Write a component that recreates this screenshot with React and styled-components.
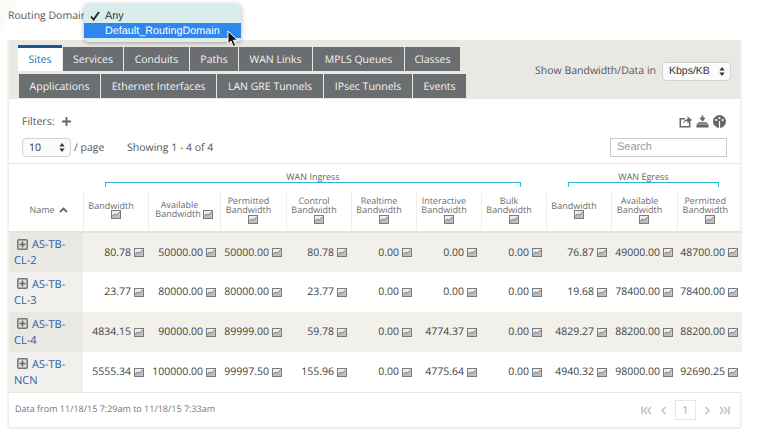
import React from "react";
import styled, { createGlobalStyle } from "styled-components";

const GlobalStyle = createGlobalStyle`
  html, body {
    margin: 0;
    padding: 0;
    background: #ffffff;
    font-family: "Open Sans", "Liberation Sans", sans-serif;
    color: #4a4a4a;
    overflow: hidden;
    text-rendering: geometricPrecision;
  }
`;

const Page = styled.div`
  position: relative;
  width: 757px;
  height: 431px;
  padding: 0 16px 0 8px;
  box-sizing: border-box;
  background: linear-gradient(118deg, #fbfaf6 0, #fbfaf6 15px, #ffffff 16px);
`;

const TopBar = styled.div`
  height: 40px;
  padding-top: 8px;
  box-sizing: border-box;
  font-size: 10.5px;
  line-height: 17px;
  color: #555;
`;

const Menu = styled.div`
  position: absolute;
  left: 84px;
  top: 4px;
  width: 157px;
  height: 38px;
  padding-top: 4px;
  box-sizing: border-box;
  border-radius: 5px;
  background: #d9edec;
  box-shadow: 0 1px 5px rgba(0, 0, 0, 0.3);
  font-family: "Liberation Sans", sans-serif;
  font-size: 10.8px;
  z-index: 2;
`;

const MenuItem = styled.div`
  position: relative;
  height: 15px;
  line-height: 16px;
  padding-left: 21px;
  color: ${(p) => (p.$active ? "#ffffff" : "#333333")};
  background: ${(p) => (p.$active ? "#2f86ec" : "transparent")};
`;

const Check = styled.svg`
  position: absolute;
  left: 6px;
  top: 3px;
`;

const Cursor = styled.svg`
  position: absolute;
  left: 227px;
  top: 30px;
  z-index: 3;
`;

const Panel = styled.div`
  box-shadow: 0 1px 2px rgba(0, 0, 0, 0.14);
  border-left: 1px solid #eeeeea;
  border-right: 1px solid #eeeeea;
`;

const TabArea = styled.div`
  height: 59px;
  background: #e9e8e3;
  padding: 5px 0 0 9px;
  box-sizing: border-box;
  display: flex;
  justify-content: space-between;
`;

const TabRows = styled.div`
  display: flex;
  flex-direction: column;
  gap: 3px;
`;

const TabRow = styled.div`
  display: flex;
  gap: 1px;
  padding-left: ${(p) => p.$indent || 0}px;
  align-items: flex-end;
`;

const Tab = styled.div`
  width: ${(p) => p.$w}px;
  height: ${(p) => (p.$active ? 26 : 24)}px;
  box-sizing: border-box;
  background: ${(p) => (p.$active ? "#ffffff" : "#6b6e70")};
  color: ${(p) => (p.$active ? "#2a6cb0" : "#f4f4f4")};
  border-top: ${(p) => (p.$active ? "3px solid #17559c" : "none")};
  font-size: 10.5px;
  font-weight: 400;
  line-height: ${(p) => (p.$active ? 25 : 26)}px;
  text-align: center;
  white-space: nowrap;
`;

const UnitPicker = styled.div`
  display: flex;
  align-items: center;
  gap: 6px;
  height: 26px;
  margin: 13px 9px 0 0;
  font-size: 10.5px;
  color: #555;
`;

const NativeSelect = styled.div`
  width: ${(p) => p.$w}px;
  height: ${(p) => p.$h}px;
  box-sizing: border-box;
  border: 1px solid #d2d2d2;
  border-radius: 4px;
  background: #fbfbfb;
  display: flex;
  align-items: center;
  justify-content: space-between;
  padding: 0 5px 0 6px;
  font-family: ${(p) => (p.$sans ? '"Liberation Sans", sans-serif' : "inherit")};
  font-size: 10.5px;
  color: #333;
`;

const Toolbar = styled.div`
  height: 65px;
  padding: 0 13px;
  box-sizing: border-box;
  border-bottom: 1px solid #e6e6e6;
  display: flex;
  justify-content: space-between;
`;

const ToolbarLeft = styled.div`
  padding-top: 14px;
  font-size: 10.5px;
  color: #555;
`;

const FilterLine = styled.div`
  display: flex;
  align-items: center;
  gap: 8px;
  height: 17px;
`;

const PageLine = styled.div`
  display: flex;
  align-items: center;
  margin-top: 8px;
  height: 19px;
`;

const PerPage = styled.span`
  margin-left: 3px;
  width: 53px;
`;

const ToolbarRight = styled.div`
  display: flex;
  flex-direction: column;
  align-items: flex-end;
  padding-top: 16px;
`;

const ExportIcons = styled.div`
  display: flex;
  gap: 4px;
  height: 14px;
  margin-right: 1px;
`;

const Search = styled.div`
  width: 117px;
  height: 19px;
  margin-top: 9px;
  box-sizing: border-box;
  border: 1px solid #cccccc;
  padding-left: 6px;
  font-family: "Liberation Sans", sans-serif;
  font-size: 11px;
  line-height: 17px;
  color: #9a9a9a;
`;

const GroupRow = styled.div`
  height: 27px;
  padding-left: 96px;
  display: flex;
  gap: 47px;
`;

const Group = styled.div`
  width: ${(p) => p.$w}px;
  font-size: 9px;
  line-height: 13px;
  padding-top: 6px;
  text-align: center;
  color: #666;
  box-sizing: border-box;
`;

const Bracket = styled.div`
  height: 4px;
  margin-top: -1px;
  border: 1px solid #2cb5d6;
  border-bottom: none;
`;

const Table = styled.table`
  width: 733px;
  table-layout: fixed;
  border-collapse: collapse;
`;

const HeadCell = styled.th`
  box-sizing: border-box;
  height: 41px;
  padding: 0 2px 3px;
  border-left: 1px solid #eeeeea;
  border-bottom: 2px solid #e4e3dc;
  font-size: 9px;
  font-weight: 400;
  color: #6e6e6e;
  text-align: center;
  vertical-align: middle;
  white-space: nowrap;
  &:first-child {
    border-left: none;
    padding-left: 8px;
  }
`;

const HeadLabel = styled.div`
  line-height: 9px;
  padding-right: ${(p) => (p.$flush ? 0 : 9)}px;
`;

const HeadIcon = styled.div`
  height: 9px;
  line-height: 9px;
`;

const Row = styled.tr`
  height: 40px;
  background: ${(p) => (p.$odd ? "#f1f0eb" : "#ffffff")};
`;

const NameCell = styled.td`
  padding: 1px 4px 0 5px;
  background: ${(p) => (p.$odd ? "#e9e8e3" : "#f1f0ed")};
  font-size: 11px;
  line-height: 16px;
  font-weight: 400;
  color: #1f5ea8;
`;

const ValueCell = styled.td`
  padding: 0 4px 0 0;
  font-size: 10.5px;
  color: #444;
  text-align: right;
  white-space: nowrap;
`;

const ChartBox = styled.svg`
  vertical-align: -1.5px;
  margin-left: ${(p) => p.$gap ?? 3}px;
`;

const Footer = styled.div`
  height: 34px;
  border-top: 1px solid #e8e7e2;
  padding: 0 10px 0 6px;
  display: flex;
  align-items: center;
  justify-content: space-between;
  font-size: 9px;
  color: #777;
`;

const FooterNote = styled.span`
  margin-bottom: 3px;
`;

const Pager = styled.div`
  display: flex;
  align-items: center;
  gap: 8px;
`;

const PageBox = styled.div`
  width: 21px;
  height: 20px;
  box-sizing: border-box;
  border: 1px solid #e6e6e6;
  font-size: 11px;
  line-height: 20px;
  text-align: center;
  color: #aaa;
`;

const Stepper = () => (
  <svg width="6" height="11" viewBox="0 0 6 11">
    <path d="M3 1 L5.6 4.4 H0.4 Z M3 10 L5.6 6.6 H0.4 Z" fill="#333" />
  </svg>
);

const ChartIcon = ({ gap }) => (
  <ChartBox $gap={gap} width="10" height="9" viewBox="0 0 10 9">
    <rect x="0.5" y="0.5" width="9" height="8" fill="#eeeeee" stroke="#7a7a7a" />
    <path d="M1 7 L3.2 4.5 L5 5.6 L8.8 2.4 V8 H1 Z" fill="#bdbdbd" />
    <path d="M1 6.6 L3.2 4 L5 5.2 L8.8 2" fill="none" stroke="#666" strokeWidth="0.9" />
  </ChartBox>
);

const ExpandIcon = () => (
  <svg width="11" height="11" viewBox="0 0 11 11" style={{ verticalAlign: "-1.5px", margin: "0 4px 0 3px" }}>
    <rect x="0.75" y="0.75" width="9.5" height="9.5" rx="1" fill="#dedede" stroke="#777" strokeWidth="1.5" />
    <path d="M5.5 2.5 V8.5 M2.5 5.5 H8.5" stroke="#666" strokeWidth="1.5" />
  </svg>
);

const ShareIcon = () => (
  <svg width="13" height="13" viewBox="0 0 13 13">
    <path d="M0.5 3 H6 V4.5 H2 V11 H10 V7 H11.5 V12.5 H0.5 Z" fill="#666" />
    <path d="M3.8 9.2 C4.2 6.2 6 4.4 8.5 4.2 V1.5 L13 5 L8.5 8.4 V6 C6.6 6 5 7 3.8 9.2 Z" fill="#666" />
  </svg>
);

const DownloadIcon = () => (
  <svg width="13" height="13" viewBox="0 0 13 13">
    <path d="M6.5 0.5 V4.2 M4.4 2.8 L6.5 5.4 L8.6 2.8" fill="none" stroke="#666" strokeWidth="1.7" />
    <path d="M2.6 7 H10.4 L12.5 9.5 H0.5 Z" fill="#8a8a8a" />
    <rect x="0.5" y="9.5" width="12" height="3" fill="#666" />
  </svg>
);

const PaletteIcon = () => (
  <svg width="13" height="13" viewBox="0 0 13 13">
    <circle cx="6.5" cy="6.5" r="6.5" fill="#666" />
    <circle cx="3.3" cy="5" r="1.1" fill="#fff" />
    <circle cx="6.5" cy="3" r="1.1" fill="#fff" />
    <circle cx="9.7" cy="5" r="1.1" fill="#fff" />
    <path d="M5.9 6 H7.1 V13 H5.9 Z" fill="#fff" />
  </svg>
);

const PagerIcon = ({ d, w }) => (
  <svg width={w} height="9" viewBox={`0 0 ${w} 9`}>
    <path d={d} fill="none" stroke="#c4c4c4" strokeWidth="1.6" />
  </svg>
);

const columns = [
  { w: 74 },
  { w: 65, label: ["Bandwidth"] },
  { w: 72, label: ["Available", "Bandwidth"], inline: true },
  { w: 66, label: ["Permitted", "Bandwidth"] },
  { w: 65, label: ["Control", "Bandwidth"] },
  { w: 65, label: ["Realtime", "Bandwidth"] },
  { w: 65, label: ["Interactive", "Bandwidth"] },
  { w: 65, label: ["Bulk", "Bandwidth"] },
  { w: 65, label: ["Bandwidth"] },
  { w: 66, label: ["Available", "Bandwidth"] },
  { w: 65, label: ["Permitted", "Bandwidth"] },
];

const rows = [
  { first: "AS-TB-", second: "CL-2", values: ["80.78", "50000.00", "50000.00", "80.78", "0.00", "0.00", "0.00", "76.87", "49000.00", "48700.00"] },
  { first: "AS-TB-", second: "CL-3", values: ["23.77", "80000.00", "80000.00", "23.77", "0.00", "0.00", "0.00", "19.68", "78400.00", "78400.00"] },
  { first: "AS-TB-", second: "CL-4", values: ["4834.15", "90000.00", "89999.00", "59.78", "0.00", "4774.37", "0.00", "4829.27", "88200.00", "88200.00"] },
  { first: "AS-TB-", second: "NCN", values: ["5555.34", "100000.00", "99997.50", "155.96", "0.00", "4775.64", "0.00", "4940.32", "98000.00", "92690.25"] },
];

const topTabs = [
  ["Sites", 44, true],
  ["Services", 60],
  ["Conduits", 65],
  ["Paths", 48],
  ["WAN Links", 73],
  ["MPLS Queues", 91],
  ["Classes", 55],
];

const bottomTabs = [
  ["Applications", 81],
  ["Ethernet Interfaces", 115],
  ["LAN GRE Tunnels", 106],
  ["IPsec Tunnels", 88],
  ["Events", 53],
];

export default function App() {
  return (
    <Page>
      <GlobalStyle />
      <TopBar>Routing Domain</TopBar>
      <Menu>
        <MenuItem>
          <Check width="10" height="10" viewBox="0 0 10 10">
            <path d="M1 5.5 L3.6 8.6 L9 1" fill="none" stroke="#222" strokeWidth="1.8" />
          </Check>
          Any
        </MenuItem>
        <MenuItem $active>Default_RoutingDomain</MenuItem>
      </Menu>
      <Cursor width="12" height="18" viewBox="0 0 12 18">
        <path d="M1 1 V14 L4 11 L6.2 16.5 L8.6 15.5 L6.4 10.2 H10.5 Z" fill="#111" stroke="#fff" strokeWidth="1" />
      </Cursor>

      <Panel>
        <TabArea>
          <TabRows>
            <TabRow>
              {topTabs.map(([name, w, active]) => (
                <Tab key={name} $w={w} $active={active}>
                  {name}
                </Tab>
              ))}
            </TabRow>
            <TabRow $indent={1}>
              {bottomTabs.map(([name, w]) => (
                <Tab key={name} $w={w}>
                  {name}
                </Tab>
              ))}
            </TabRow>
          </TabRows>
          <UnitPicker>
            Show Bandwidth/Data in
            <NativeSelect $w={69} $h={19} $sans>
              Kbps/KB
              <Stepper />
            </NativeSelect>
          </UnitPicker>
        </TabArea>

        <Toolbar>
          <ToolbarLeft>
            <FilterLine>
              Filters:
              <svg width="9" height="9" viewBox="0 0 9 9">
                <path d="M4.5 0 V9 M0 4.5 H9" stroke="#666" strokeWidth="1.8" />
              </svg>
            </FilterLine>
            <PageLine>
              <NativeSelect $w={49} $h={19}>
                10
                <Stepper />
              </NativeSelect>
              <PerPage>/ page</PerPage>
              Showing 1 - 4 of 4
            </PageLine>
          </ToolbarLeft>
          <ToolbarRight>
            <ExportIcons>
              <ShareIcon />
              <DownloadIcon />
              <PaletteIcon />
            </ExportIcons>
            <Search>Search</Search>
          </ToolbarRight>
        </Toolbar>

        <GroupRow>
          <Group $w={416}>
            WAN Ingress
            <Bracket />
          </Group>
          <Group $w={151}>
            WAN Egress
            <Bracket />
          </Group>
        </GroupRow>

        <Table>
          <colgroup>
            {columns.map((c, i) => (
              <col key={i} style={{ width: c.w }} />
            ))}
          </colgroup>
          <thead>
            <tr>
              <HeadCell>
                Name{" "}
                <svg width="9" height="6" viewBox="0 0 9 6" style={{ marginLeft: 2 }}>
                  <path d="M1 5 L4.5 1.5 L8 5" fill="none" stroke="#666" strokeWidth="1.8" />
                </svg>
              </HeadCell>
              {columns.slice(1).map((c, i) => (
                <HeadCell key={i}>
                  {c.label.map((line, j) => {
                    const withIcon = c.inline && j === c.label.length - 1;
                    return (
                      <HeadLabel key={j} $flush={withIcon}>
                        {line}
                        {withIcon && <ChartIcon gap={2} />}
                      </HeadLabel>
                    );
                  })}
                  {!c.inline && (
                    <HeadIcon>
                      <ChartIcon gap={0} />
                    </HeadIcon>
                  )}
                </HeadCell>
              ))}
            </tr>
          </thead>
          <tbody>
            {rows.map((row, i) => (
              <Row key={row.second} $odd={i % 2 === 0}>
                <NameCell $odd={i % 2 === 0}>
                  <ExpandIcon />
                  {row.first}
                  <br />
                  {row.second}
                </NameCell>
                {row.values.map((v, j) => (
                  <ValueCell key={j}>
                    {v}
                    <ChartIcon />
                  </ValueCell>
                ))}
              </Row>
            ))}
          </tbody>
        </Table>

        <Footer>
          <FooterNote>Data from 11/18/15 7:29am to 11/18/15 7:33am</FooterNote>
          <Pager>
            <PagerIcon w={11} d="M1 0.5 V8.5 M6 1 L3 4.5 L6 8 M10 1 L7 4.5 L10 8" />
            <PagerIcon w={7} d="M5.5 1 L2 4.5 L5.5 8" />
            <PageBox>1</PageBox>
            <PagerIcon w={7} d="M1.5 1 L5 4.5 L1.5 8" />
            <PagerIcon w={11} d="M1 1 L4 4.5 L1 8 M5 1 L8 4.5 L5 8 M10 0.5 V8.5" />
          </Pager>
        </Footer>
      </Panel>
    </Page>
  );
}
